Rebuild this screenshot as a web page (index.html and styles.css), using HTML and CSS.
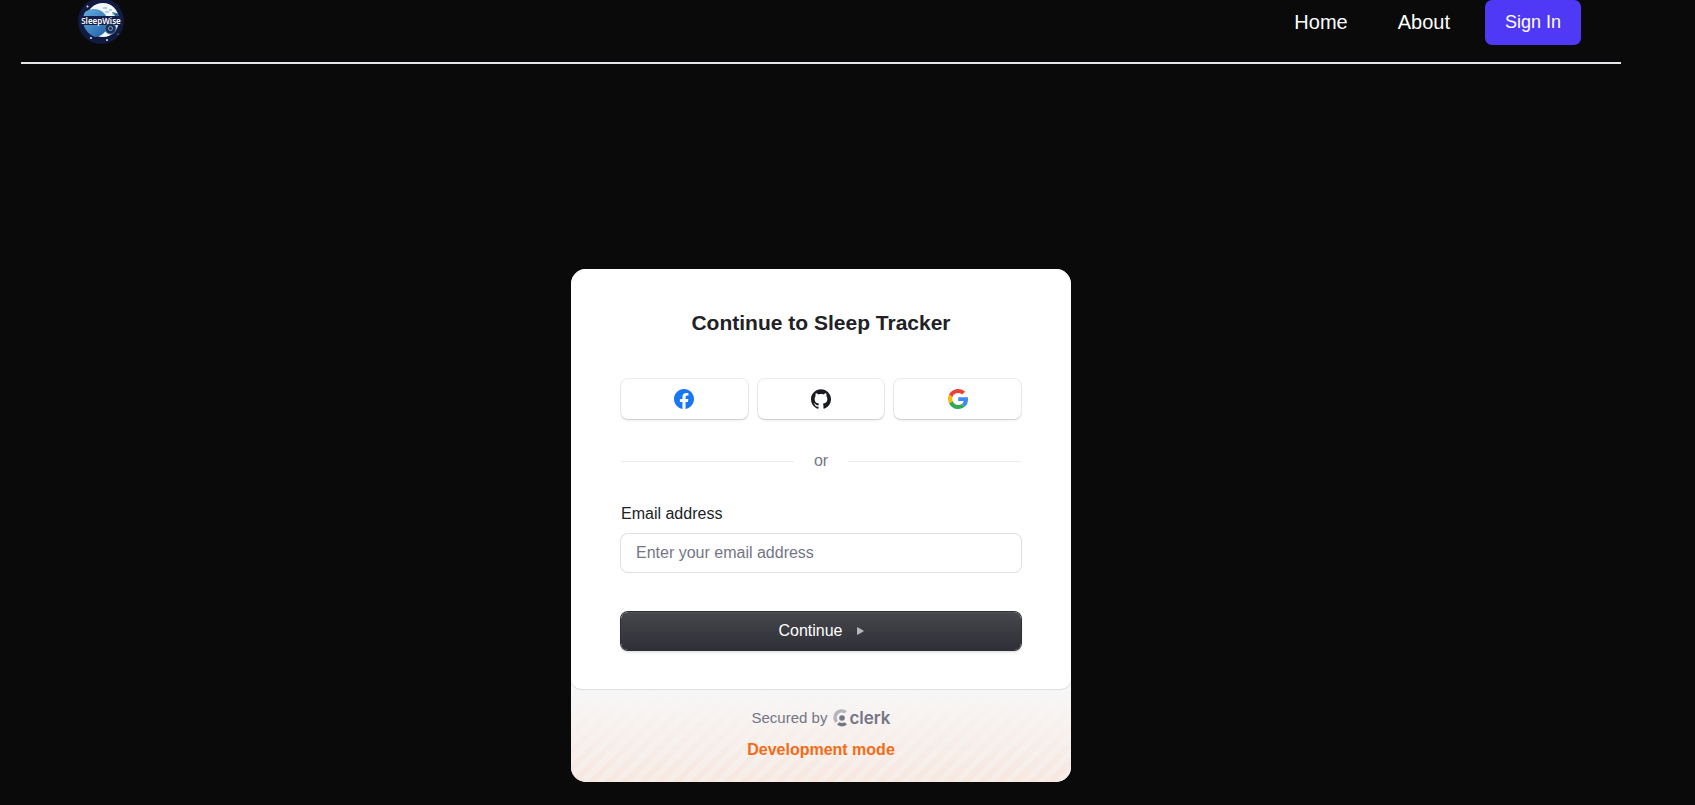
FILE: index.html
```html
<!DOCTYPE html>
<html lang="en">
<head>
<meta charset="utf-8">
<meta name="viewport" content="width=device-width, initial-scale=1">
<title>Sleep Tracker</title>
<link rel="stylesheet" href="styles.css">
</head>
<body>
<div class="page">
  <header class="navbar">
    <a class="brand" href="#" aria-label="SleepWise">
      <svg class="brand-logo" viewBox="0 0 46 46" aria-hidden="true">
        <defs>
          <clipPath id="disc"><circle cx="23" cy="22" r="18"/></clipPath>
          <linearGradient id="sky" x1="0" y1="0" x2="1" y2="1"><stop offset="0" stop-color="#6db2e2"/><stop offset="1" stop-color="#1b5fa6"/></linearGradient>
        </defs>
        <circle cx="23" cy="23" r="23" fill="#111b40"/>
        <g clip-path="url(#disc)">
          <circle cx="25" cy="22" r="17" fill="#f3f8fc"/>
          <circle cx="16" cy="25" r="14" fill="url(#sky)"/>
          <path d="M34 14c7 8 8 17 1 25l7-4V16z" fill="#20649c"/>
        </g>
        <path d="M25 10h4M31 12h3M27 14h4M34 16h3" stroke="#75a9cf" stroke-width="1"/>
        <path d="M2 18h42v9H2z" fill="#14204c"/>
        <circle cx="32.500" cy="30.500" r="5.500" fill="#17305c" stroke="#5b7894"/>
        <circle cx="32.500" cy="30.500" r="2" fill="none" stroke="#8ba4bd"/>
        <g fill="#dce8f6"><circle cx="9.500" cy="8.500" r="1"/><circle cx="13" cy="40" r="1"/><circle cx="29" cy="42" r="1"/><circle cx="40" cy="36" r=".5"/></g>
        <text class="brand-name" x="23" y="26" text-anchor="middle">SleepWise</text>
      </svg>
    </a>
    <nav class="nav">
      <a class="nav-link" href="#">Home</a>
      <a class="nav-link" href="#">About</a>
      <button class="sign-in" type="button">Sign In</button>
    </nav>
  </header>
  <main class="main">
    <section class="card">
      <form class="card-body">
        <h1 class="title">Continue to Sleep Tracker</h1>
        <div class="socials">
          <button class="social" type="button" aria-label="Continue with Facebook">
            <svg class="social-icon" viewBox="0 0 24 24"><path fill="#1877f2" d="M24 12.073c0-6.627-5.373-12-12-12s-12 5.373-12 12c0 5.990 4.388 10.954 10.125 11.854v-8.385H7.078v-3.470h3.047V9.430c0-3.007 1.792-4.669 4.533-4.669 1.312 0 2.686.235 2.686.235v2.953H15.830c-1.491 0-1.956.925-1.956 1.874v2.250h3.328l-.532 3.470h-2.796v8.385C19.612 23.027 24 18.062 24 12.073z"/></svg>
          </button>
          <button class="social" type="button" aria-label="Continue with GitHub">
            <svg class="social-icon" viewBox="0 0 24 24"><path fill="#191b22" d="M12 .297c-6.630 0-12 5.373-12 12 0 5.303 3.438 9.800 8.205 11.385.6.113.82-.258.82-.577 0-.285-.010-1.040-.015-2.040-3.338.724-4.042-1.610-4.042-1.610C4.422 18.070 3.633 17.700 3.633 17.700c-1.087-.744.084-.729.084-.729 1.205.084 1.838 1.236 1.838 1.236 1.070 1.835 2.809 1.305 3.495.998.108-.776.417-1.305.76-1.605-2.665-.3-5.466-1.332-5.466-5.930 0-1.310.465-2.380 1.235-3.220-.135-.303-.54-1.523.105-3.176 0 0 1.005-.322 3.300 1.230.96-.267 1.980-.399 3-.405 1.020.006 2.040.138 3 .405 2.280-1.552 3.285-1.230 3.285-1.230.645 1.653.24 2.873.12 3.176.765.84 1.230 1.910 1.230 3.220 0 4.610-2.805 5.625-5.475 5.920.42.36.81 1.096.81 2.220 0 1.606-.015 2.896-.015 3.286 0 .315.21.69.825.57C20.565 22.092 24 17.592 24 12.297c0-6.627-5.373-12-12-12"/></svg>
          </button>
          <button class="social" type="button" aria-label="Continue with Google">
            <svg class="social-icon" viewBox="0 0 48 48"><path fill="#4285f4" d="M48 24.500c0-1.600-.2-3.300-.4-4.900H24.500v9.300h13.200c-.6 3-2.300 5.500-4.900 7.200l7.900 6.100C45.400 38 48 31.800 48 24.500z"/><path fill="#34a853" d="M24.500 48c6.600 0 12.100-2.200 16.200-5.800l-7.900-6.100c-2.200 1.500-5 2.300-8.300 2.300-6.400 0-11.800-4.300-13.700-10.100L2.600 34.600C6.700 42.600 15 48 24.500 48z"/><path fill="#fbbc05" d="M10.800 28.300a14.400 14.400 0 0 1 0-9.100l-8.200-6.300a24 24 0 0 0 0 21.700z"/><path fill="#ea4335" d="M24.500 9.600c3.600 0 6.800 1.200 9.400 3.700l7-7C36.600 2.300 31.100 0 24.500 0 15 0 6.700 5.400 2.600 12.900l8.200 6.300c1.900-5.800 7.300-9.600 13.700-9.600z"/></svg>
          </button>
        </div>
        <div class="divider"><span>or</span></div>
        <label class="label" for="email">Email address</label>
        <input class="input" id="email" type="email" placeholder="Enter your email address">
        <button class="continue" type="submit">Continue
          <svg class="arrow" viewBox="0 0 8 8" aria-hidden="true"><path d="M1 .6v6.800q0 .6.6.3L7.400 4.400q.5-.4 0-.8L1.600.3Q1 0 1 .6z" fill="currentColor"/></svg>
        </button>
      </form>
      <footer class="card-footer">
        <div class="secured">
          <span>Secured by</span>
          <a class="clerk" href="#">
            <svg class="clerk-mark" viewBox="0 0 16 18" aria-hidden="true"><path d="M13.800 2A8.300 8.300 0 0 0 2.400 14l2.400-2.400A5 5 0 0 1 11.400 4.400z" fill="currentColor" opacity=".5"/><circle cx="9" cy="9" r="2.800" fill="currentColor"/><path d="M4 15.600 6.300 13.300q2.700 1.300 5.400 0l2.300 2.300q-5 3.800-10 0z" fill="currentColor"/></svg>
            <span>clerk</span>
          </a>
        </div>
        <p class="mode">Development mode</p>
      </footer>
    </section>
  </main>
</div>
</body>
</html>
```
FILE: styles.css
```css
* { box-sizing: border-box; }

body {
  margin: 0;
  background: #0a0a0a;
  color: #fff;
  font-family: "Liberation Sans", Arial, sans-serif;
}

button, input { font: inherit; }
a { color: inherit; text-decoration: none; }

.page { margin: 0 74px 0 21px; }

.navbar {
  display: flex;
  align-items: center;
  justify-content: space-between;
  height: 64px;
  padding: 0 40px 18px 57px;
  border-bottom: 2px solid #e5e7eb;
}

.brand-logo {
  display: block;
  width: 46px;
  height: 46px;
  margin-top: -2px;
}

.brand-name {
  font: 600 8px "Noto Sans", sans-serif;
  fill: #fff;
}

.nav { display: flex; align-items: center; }
.nav-link { margin-right: 50px; font-size: 20px; }
.nav-link + .nav-link { margin-right: 35px; }

.sign-in {
  padding: 12px 20px;
  border: 0;
  border-radius: 7px;
  background: #4f39f6;
  color: #fff;
  font-size: 18px;
  line-height: 21px;
}

.main {
  display: flex;
  justify-content: center;
  padding: 205px 0 22px;
}

.card {
  width: 100%;
  max-width: 500px;
  overflow: hidden;
  border-radius: 15px;
  background: #f7f7f7;
  color: #212126;
}

.card-body {
  position: relative;
  display: flex;
  flex-direction: column;
  padding: 39px 50px;
  border-radius: 0 0 10px 10px;
  background: #fff;
  box-shadow: 0 0 2px rgba(0, 0, 0, 0.1), 0 1px 1px rgba(0, 0, 0, 0.08);
}

.title {
  margin: 0 0 41px;
  font-size: 21px;
  line-height: 30px;
  text-align: center;
}

.socials {
  display: grid;
  grid-template-columns: repeat(3, 1fr);
  gap: 10px;
}

.social {
  display: flex;
  align-items: center;
  justify-content: center;
  height: 40px;
  padding: 0;
  border: 0;
  border-radius: 7px;
  background: #fff;
  box-shadow: 0 0 0 1px rgba(0, 0, 0, 0.07), 0 1px 1px rgba(0, 0, 0, 0.08), 0 2px 3px rgba(0, 0, 0, 0.06);
}

.social-icon { width: 20px; height: 20px; }

.divider {
  display: flex;
  align-items: center;
  gap: 20px;
  margin: 30px 0;
  color: #747686;
  font-size: 16px;
  line-height: 24px;
}

.divider::before, .divider::after {
  content: "";
  flex: 1;
  height: 1px;
  background: #ececec;
}

.label { margin-bottom: 9px; font-size: 16px; line-height: 22px; }

.input {
  width: 100%;
  height: 38px;
  padding: 0 15px;
  border: 0;
  border-radius: 7px;
  background: #fff;
  box-shadow: 0 0 0 1px #e0e0e0, 0 1px 1px rgba(0, 0, 0, 0.04);
  color: #212126;
  font-size: 16px;
}

.input::placeholder { color: #747686; opacity: 1; }

.continue {
  display: flex;
  align-items: center;
  justify-content: center;
  gap: 13px;
  height: 38px;
  margin-top: 40px;
  padding: 0;
  border: 0;
  border-radius: 7px;
  background: linear-gradient(#46474c, #2f3037);
  box-shadow: 0 0 0 1px #2f3037, inset 0 1px 1px rgba(255, 255, 255, 0.07), 0 2px 3px rgba(34, 42, 53, 0.2);
  color: #fff;
  font-size: 16px;
}

.arrow { width: 8px; height: 8px; color: #b6b6b9; }

.card-footer {
  display: flex;
  flex-direction: column;
  align-items: center;
  gap: 12px;
  padding: 19px 20px 22px;
  background:
    linear-gradient(#f7f7f7, rgba(247, 247, 247, 0)),
    repeating-linear-gradient(-45deg, #f7e7df 0 6px, #f7ede8 6px 12px);
}

.secured {
  display: flex;
  align-items: center;
  gap: 6px;
  color: #747686;
  font-size: 15px;
  line-height: 20px;
}

.clerk {
  display: flex;
  align-items: center;
  font: 600 17px/18px Inter, sans-serif;
}

.clerk-mark { width: 16px; height: 18px; }

.mode {
  margin: 0;
  color: #f36b16;
  font-size: 16px;
  font-weight: 700;
  line-height: 20px;
}
```
